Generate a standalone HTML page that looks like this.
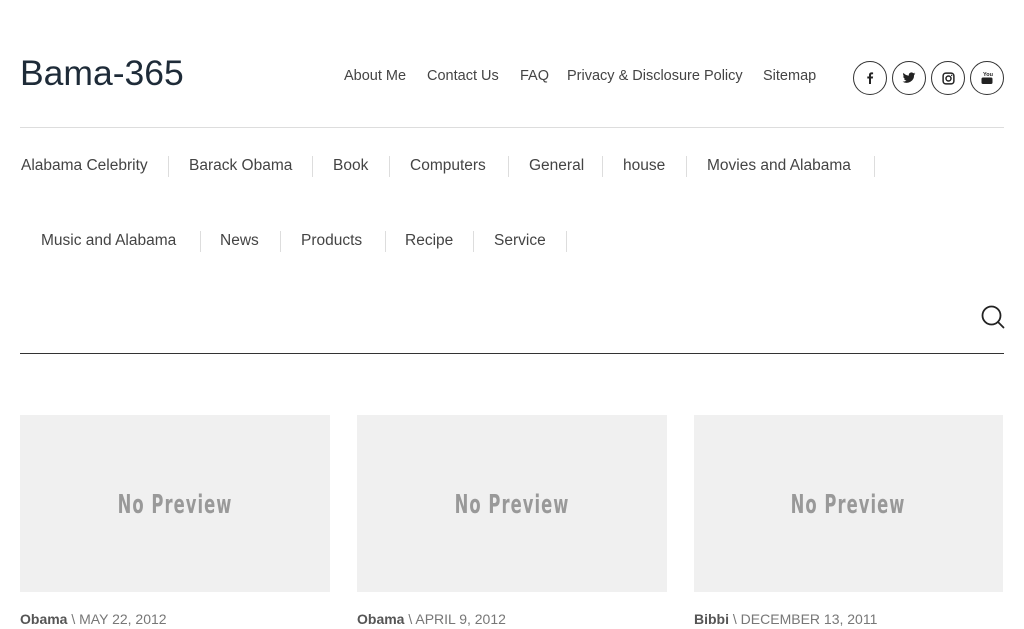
<!DOCTYPE html>
<html><head><meta charset="utf-8"><style>
*{margin:0;padding:0;box-sizing:border-box}
body{width:1024px;height:629px;overflow:hidden;background:#fff;font-family:"Liberation Sans",sans-serif;position:relative;color:#444}
.a{position:absolute;white-space:nowrap}
.title{left:20px;top:53px;font-size:35.5px;color:#1e2b38}
.tm{top:68px;font-size:14.5px;color:#444}
.cat{font-size:15.5px;color:#444}
.sep{position:absolute;width:1px;height:21px;background:#ddd}
.soc{position:absolute;top:61px;width:34px;height:34px;border:1.3px solid #333;border-radius:50%;display:flex;align-items:center;justify-content:center}
.card{position:absolute;top:415px;width:310px;height:177px;background:#f0f0f0;display:flex;align-items:center;justify-content:center}
.np{font-family:"DejaVu Sans Condensed","Liberation Sans Narrow",sans-serif;font-size:26px;color:#999;letter-spacing:1.5px;transform:scaleX(0.7);font-weight:bold;margin-top:2px}
.meta{top:611px;font-size:14px;color:#777}
.meta b{color:#555}
</style></head><body>
<div class="a title">Bama-365</div>
<div class="a tm" style="left:344px">About Me</div>
<div class="a tm" style="left:427px">Contact Us</div>
<div class="a tm" style="left:520px">FAQ</div>
<div class="a tm" style="left:567px">Privacy &amp; Disclosure Policy</div>
<div class="a tm" style="left:763px">Sitemap</div>

<div class="soc" style="left:853px"><svg width="14" height="14" viewBox="0 0 14 14"><path d="M8 13V7.5h1.8l.3-2H8V4.3c0-.6.2-1 1-1h1.1V1.5C9.8 1.4 9.3 1.4 8.6 1.4 7.1 1.4 6 2.3 6 4v1.5H4.3v2H6V13z" fill="#222"/></svg></div>
<div class="soc" style="left:892px"><svg width="14" height="14" viewBox="0 0 24 24"><path d="M23 4.6c-.8.4-1.7.6-2.6.7.9-.6 1.6-1.4 2-2.5-.9.5-1.9.9-2.9 1.1A4.5 4.5 0 0 0 11.8 8 12.8 12.8 0 0 1 2.5 3.3a4.5 4.5 0 0 0 1.4 6c-.7 0-1.4-.2-2-.6 0 2.2 1.6 4 3.6 4.4-.7.2-1.4.2-2 .1.6 1.8 2.2 3.1 4.2 3.1A9 9 0 0 1 1 18.2 12.8 12.8 0 0 0 20.7 7.4V6.8c.9-.6 1.7-1.4 2.3-2.2z" fill="#222"/></svg></div>
<div class="soc" style="left:931px"><svg width="13" height="13" viewBox="0 0 14 14"><rect x="1.2" y="1.2" width="11.6" height="11.6" rx="3" fill="none" stroke="#222" stroke-width="1.6"/><circle cx="7" cy="7" r="2.7" fill="none" stroke="#222" stroke-width="1.6"/><circle cx="10.4" cy="3.6" r=".8" fill="#222"/></svg></div>
<div class="soc" style="left:970px"><svg width="14" height="16" viewBox="0 0 14 16"><text x="3" y="6" font-size="5.5" font-family="Liberation Sans" font-weight="bold" fill="#222">You</text><rect x="1.5" y="7.5" width="11" height="6.5" rx="1.5" fill="#222"/></svg></div>

<div class="a" style="left:20px;top:127px;width:984px;height:1px;background:#ddd"></div>

<div class="a cat" style="left:21px;top:157px">Alabama Celebrity</div><div class="sep" style="left:168px;top:156px"></div>
<div class="a cat" style="left:189px;top:157px">Barack Obama</div><div class="sep" style="left:312px;top:156px"></div>
<div class="a cat" style="left:333px;top:157px">Book</div><div class="sep" style="left:389px;top:156px"></div>
<div class="a cat" style="left:410px;top:157px">Computers</div><div class="sep" style="left:508px;top:156px"></div>
<div class="a cat" style="left:529px;top:157px">General</div><div class="sep" style="left:602px;top:156px"></div>
<div class="a cat" style="left:623px;top:157px">house</div><div class="sep" style="left:686px;top:156px"></div>
<div class="a cat" style="left:707px;top:157px">Movies and Alabama</div><div class="sep" style="left:874px;top:156px"></div>

<div class="a cat" style="left:41px;top:232px">Music and Alabama</div><div class="sep" style="left:200px;top:231px"></div>
<div class="a cat" style="left:220px;top:232px">News</div><div class="sep" style="left:280px;top:231px"></div>
<div class="a cat" style="left:301px;top:232px">Products</div><div class="sep" style="left:385px;top:231px"></div>
<div class="a cat" style="left:405px;top:232px">Recipe</div><div class="sep" style="left:473px;top:231px"></div>
<div class="a cat" style="left:494px;top:232px">Service</div><div class="sep" style="left:566px;top:231px"></div>

<svg class="a" style="left:980px;top:304px" width="26" height="26" viewBox="0 0 26 26"><circle cx="11.5" cy="11.5" r="9" fill="none" stroke="#222" stroke-width="1.8"/><path d="M18 18l5.5 5.5" stroke="#222" stroke-width="1.8" stroke-linecap="round"/></svg>
<div class="a" style="left:20px;top:353px;width:984px;height:1px;background:#333"></div>

<div class="card" style="left:20px"><span class="np">No Preview</span></div>
<div class="card" style="left:357px"><span class="np">No Preview</span></div>
<div class="card" style="left:694px;width:309px"><span class="np">No Preview</span></div>

<div class="a meta" style="left:20px"><b>Obama</b> \ MAY 22, 2012</div>
<div class="a meta" style="left:357px"><b>Obama</b> \ APRIL 9, 2012</div>
<div class="a meta" style="left:694px"><b>Bibbi</b> \ DECEMBER 13, 2011</div>
</body></html>
